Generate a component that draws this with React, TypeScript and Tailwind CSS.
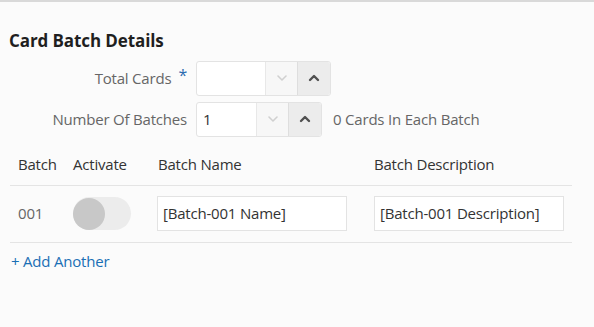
import React from "react";

function Chevron({ up, color }: { up?: boolean; color: string }) {
  return (
    <svg width="14" height="14" viewBox="0 0 14 14" fill="none">
      <path
        d={up ? "M3 9 L7 5 L11 9" : "M3 5 L7 9 L11 5"}
        stroke={color}
        strokeWidth={up ? 2.4 : 1.6}
        strokeLinecap="round"
        strokeLinejoin="round"
      />
    </svg>
  );
}

function Spinner({ value, textW, upW }: { value: string; textW: string; upW: string }) {
  return (
    <div className="flex h-[35px] rounded-[3px] border border-[#e3e3e3] bg-white overflow-hidden">
      <div className={`${textW} flex items-center pl-[6px] text-[15px] text-[#333]`}>{value}</div>
      <div className="w-[32px] flex items-center justify-center border-l border-[#e8e8e8] bg-[#f7f7f7]">
        <Chevron color="#d0d0d0" />
      </div>
      <div className={`${upW} flex items-center justify-center border-l border-[#dedede] bg-[#ececec]`}>
        <Chevron up color="#505050" />
      </div>
    </div>
  );
}

export default function App() {
  return (
    <div
      className="w-[594px] h-[327px] bg-[#fbfbfb] border-t-2 border-[#d9d9d9] text-[#333]"
      style={{ fontFamily: '"Segoe UI", "Open Sans", sans-serif' }}
    >
      <div className="pt-[26px] pl-[9px] text-[17px] font-bold text-[#1f1f1f] tracking-[-0.1px]">Card Batch Details</div>
      <div className="mt-[7px] flex flex-col gap-[6px]">
        <div className="flex items-center">
          <div className="w-[196px] pr-[9px] flex justify-end items-center text-[15px] text-[#666] tracking-[-0.2px]">
            Total Cards<span className="ml-[7px] text-[#2b6cb0] self-start text-[16px] leading-none">*</span>
          </div>
          <Spinner value="" textW="w-[68px]" upW="w-[33px]" />
        </div>
        <div className="flex items-center">
          <div className="w-[196px] pr-[9px] flex justify-end items-center text-[15px] text-[#666] tracking-[-0.2px]">
            Number Of Batches
          </div>
          <Spinner value="1" textW="w-[59px]" upW="w-[33px]" />
          <div className="ml-[11px] text-[15px] text-[#666] tracking-[-0.2px]">0 Cards In Each Batch</div>
        </div>
      </div>
      <div className="mx-[10px] w-[562px] mt-[7px]">
        <div className="flex h-[42px] items-center border-b border-[#e4e4e4] text-[15px] text-[#333] tracking-[-0.2px]">
          <div className="w-[55px] pl-[8px]">Batch</div>
          <div className="w-[85px] pl-[8px]">Activate</div>
          <div className="w-[216px] pl-[8px]">Batch Name</div>
          <div className="w-[206px] pl-[8px]">Batch Description</div>
        </div>
        <div className="flex h-[57px] items-center border-b border-[#e4e4e4] text-[15px] tracking-[-0.2px]">
          <div className="w-[55px] pl-[8px] text-[#666]">001</div>
          <div className="w-[85px] pl-[8px]">
            <div className="w-[58px] h-[33px] rounded-full bg-[#ececec] flex items-center">
              <div className="w-[32px] h-[32px] rounded-full bg-[#c8c8c8]" />
            </div>
          </div>
          <div className="w-[216px] pl-[7px]">
            <div className="w-[190px] h-[35px] border border-[#e3e3e3] bg-white flex items-center pl-[5px] text-[#333]">
              [Batch-001 Name]
            </div>
          </div>
          <div className="w-[206px] pl-[8px]">
            <div className="w-[190px] h-[35px] border border-[#e3e3e3] bg-white flex items-center pl-[5px] text-[#333]">
              [Batch-001 Description]
            </div>
          </div>
        </div>
      </div>
      <div className="pl-[11px] mt-[7px] text-[15px] text-[#1a6fb5] tracking-[-0.2px]">+ Add Another</div>
    </div>
  );
}
